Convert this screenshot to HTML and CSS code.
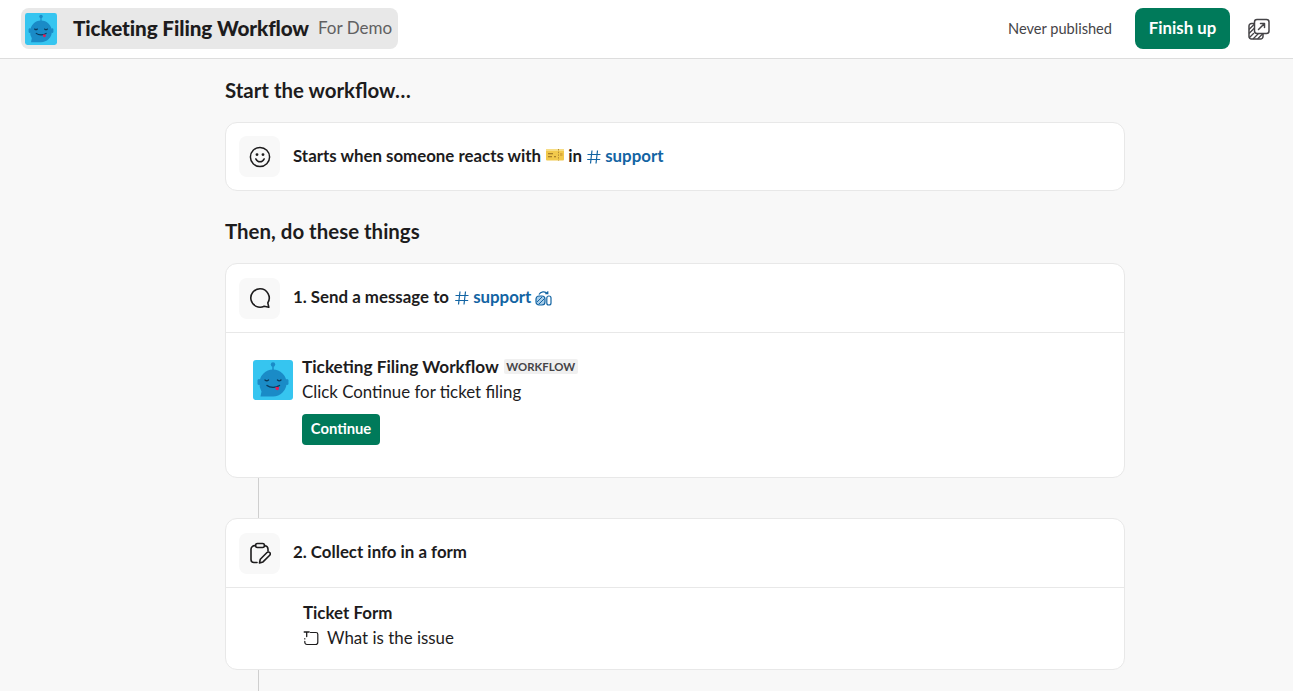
FILE: index.html
```html
<!DOCTYPE html>
<html lang="en">
<head>
<meta charset="utf-8">
<title>Ticketing Filing Workflow</title>
<link rel="stylesheet" href="styles.css">
</head>
<body>
<header class="topbar">
  <div class="title-chip">
    <svg class="logo logo-sm" viewBox="0 0 40 40"><use href="#bot"/></svg>
    <span class="title">Ticketing Filing Workflow</span>
    <span class="subtitle">For Demo</span>
  </div>
  <div class="top-actions">
    <span class="status">Never published</span>
    <button class="finish">Finish up</button>
    <svg class="share" viewBox="0 0 22 22" fill="none" stroke="#454447" stroke-width="1.500" stroke-linejoin="round" stroke-linecap="round">
      <rect x="6.500" y="1.500" width="14.500" height="14" rx="2.500"/>
      <path d="M10.500 11.500 16.500 5.500M12.500 5.500h4v4"/>
      <path d="M6 5.500H3.500a2.500 2.500 0 0 0-2.500 2.500v10.500A2.500 2.500 0 0 0 3.500 21h9a2.500 2.500 0 0 0 2.500-2.500V16"/>
      <path d="M1.500 11 6 6.500M1.500 15 6 10.500M1.500 19.500 5.500 15.500M5.500 20.500 10 16M10 20.500 14.500 16" stroke-width="1.300"/>
    </svg>
  </div>
</header>

<main class="content">
  <h2 class="section-title first">Start the workflow…</h2>
  <section class="card">
    <div class="card-head">
      <span class="icon-box">
        <svg viewBox="0 0 22 22" fill="none" stroke="#1d1c1d" stroke-width="1.500" stroke-linecap="round"><circle cx="11" cy="11" r="9.600"/><path d="M6.800 12.800c1 2 2.600 3 4.200 3s3.200-1 4.200-3"/><circle cx="8" cy="8.600" r=".7" fill="#1d1c1d"/><circle cx="14" cy="8.600" r=".7" fill="#1d1c1d"/></svg>
      </span>
      <span class="head-text">Starts when someone reacts with
        <svg class="ticket" viewBox="0 0 18 14"><rect y="1" width="18" height="11.500" rx="1" fill="#f2c94c"/><rect y="1" width="18" height="2" fill="#f7dd85"/><rect x="2" y="5" width="5" height="1.300" fill="#a9812a"/><rect x="2" y="8" width="4" height="1.300" fill="#a9812a"/><rect x="8" y="8" width="2" height="1.300" fill="#a9812a"/><path d="M12.500 1v11.500" stroke="#b58d35" stroke-dasharray="1.500 1.200"/><rect x="14" y="5" width="2.500" height="3" fill="#d9a93b"/></svg>
        in <a class="channel"><svg class="hash" viewBox="0 0 14 14" fill="none" stroke="#1264a3" stroke-width="1.200"><path d="M5 .5 3.500 13.500M10.500 .5 9 13.500M.5 4.500h13M.2 9.500h13"/></svg>support</a></span>
    </div>
  </section>

  <h2 class="section-title">Then, do these things</h2>
  <section class="card">
    <div class="card-head bordered">
      <span class="icon-box">
        <svg viewBox="0 0 22 22" fill="none" stroke="#1d1c1d" stroke-width="1.600" stroke-linejoin="round"><path d="M11 1.800a9.200 9.200 0 1 0 4.200 17.400l4.600 1.100-1-4.400A9.200 9.200 0 0 0 11 1.800Z"/></svg>
      </span>
      <span class="head-text">1. Send a message to <a class="channel"><svg class="hash" viewBox="0 0 14 14" fill="none" stroke="#1264a3" stroke-width="1.200"><path d="M5 .5 3.500 13.500M10.500 .5 9 13.500M.5 4.500h13M.2 9.500h13"/></svg>support</a>
        <svg class="shared" viewBox="0 0 17 16" fill="none" stroke="#1264a3" stroke-width="1.200"><rect x="1" y="6" width="9" height="9" rx="3" fill="#a9cde8"/><path d="M2 12 7 7M3.500 14.500 9.500 8.500" stroke-width="1"/><rect x="11.800" y="6" width="4.200" height="9" rx="2"/><path d="M4 4.500C5.500 1.500 10 .8 12.500 3.500M12.800 1.200v2.500h-2.500"/></svg>
      </span>
    </div>
    <div class="message">
      <svg class="logo logo-lg" viewBox="0 0 40 40"><use href="#bot"/></svg>
      <div class="message-body">
        <div class="sender"><strong>Ticketing Filing Workflow</strong><span class="tag">WORKFLOW</span></div>
        <p class="message-text">Click Continue for ticket filing</p>
        <button class="continue">Continue</button>
      </div>
    </div>
  </section>

  <div class="connector"></div>

  <section class="card">
    <div class="card-head bordered">
      <span class="icon-box">
        <svg viewBox="0 0 22 22" fill="none" stroke="#1d1c1d" stroke-width="1.600" stroke-linecap="round" stroke-linejoin="round"><path d="M6.500 3.800A3.500 3.500 0 0 0 2 7v10.500a3 3 0 0 0 3 3h3"/><path d="M15.500 3.800A3.500 3.500 0 0 1 19 7v2"/><rect x="6.500" y="1.500" width="9" height="4" rx="2"/><path d="M10.500 21l.8-3.800 6.700-6.700a1.900 1.900 0 0 1 2.700 2.700l-6.700 6.700Z"/></svg>
      </span>
      <span class="head-text">2. Collect info in a form</span>
    </div>
    <div class="form-body">
      <strong class="form-name">Ticket Form</strong>
      <div class="form-field">
        <svg viewBox="0 0 16 16" fill="none" stroke="#1d1c1d" stroke-width="1.200" stroke-linecap="round"><path d="M7.500 2.500h5.500a1.800 1.800 0 0 1 1.800 1.800v8a2.200 2.200 0 0 1-2.200 2.200H4a2.200 2.200 0 0 1-2.200-2.200v-1M1.800 9v-.5"/><path d="M1.200 2h5M3.700 2v4.500" stroke-width="1.300"/></svg>
        <span>What is the issue</span>
      </div>
    </div>
  </section>

  <div class="connector"></div>
</main>

<svg class="defs" aria-hidden="true">
  <symbol id="bot" viewBox="0 0 40 40">
    <rect width="40" height="40" rx="3" fill="#36c5f0"/>
    <path d="M20 4v7" stroke="#1a8bc7" stroke-width="1.500"/>
    <circle cx="20" cy="4.500" r="2.200" fill="#1a8bc7"/>
    <rect x="4.500" y="19" width="3" height="6" rx="1.500" fill="#1a8bc7"/>
    <rect x="32.500" y="19" width="3" height="6" rx="1.500" fill="#1a8bc7"/>
    <path d="M6.500 23a13.500 13.500 0 1 1 13.500 13.500H7.500l1-5A13.400 13.400 0 0 1 6.500 23Z" fill="#1a8bc7"/>
    <path d="M12 20c1 1 2.500 1 3.500 0M24.500 20c1 1 2.500 1 3.500 0M14 25.500c3 2.500 9 2.500 12.500 0" stroke="#0a3a5c" stroke-width="1.400" fill="none" stroke-linecap="round"/>
    <path d="M22.500 27h3.500v1.500a1.700 1.700 0 0 1-3.500 0Z" fill="#e01e5a"/>
  </symbol>
</svg>
</body>
</html>
```
FILE: styles.css
```css
* { box-sizing: border-box; }
html, body { margin: 0; height: 100%; }
body {
  background: #f8f8f8;
  color: #1d1c1d;
  font-family: Lato, "Liberation Sans", sans-serif;
  overflow: hidden;
}
.topbar {
  height: 59px;
  background: #fff;
  border-bottom: 1px solid #dddddd;
  display: flex;
  align-items: center;
  justify-content: space-between;
  padding: 0 23px 1px 21px;
}
.title-chip {
  display: flex;
  align-items: center;
  height: 41px;
  background: #e8e8e8;
  border-radius: 8px;
  padding: 0 6px 0 4px;
}
.logo { display: block; flex: none; }
.logo-sm { width: 32px; height: 32px; margin-right: 16px; }
.title { font-size: 20.700px; font-weight: 900; letter-spacing: -.1px; padding-bottom: 2px; }
.subtitle { font-size: 17px; color: #616061; margin-left: 9px; padding-bottom: 2px; }
.top-actions { display: flex; align-items: center; }
.status { font-size: 14.600px; color: #454447; padding-bottom: 1px; }
.finish {
  margin-left: 23px;
  width: 95px;
  height: 41px;
  background: #007a5a;
  color: #fff;
  border: 0;
  border-radius: 8px;
  font: 700 16.800px Lato, sans-serif;
  padding: 0 0 2px;
}
.share { width: 22px; height: 22px; margin-left: 18px; }
.content { width: 900px; margin-left: 225px; }
.section-title {
  margin: 0;
  height: 32px;
  font-size: 20.450px;
  line-height: 32px;
  font-weight: 700;
}
.first { margin-top: 15px; margin-bottom: 16px; }
.section-title:not(.first) { margin-top: 24px; margin-bottom: 16px; }
.card {
  background: #fff;
  border: 1px solid #e8e8e8;
  border-radius: 12px;
  overflow: hidden;
}
.card-head {
  display: flex;
  align-items: center;
  height: 67px;
  padding-left: 13px;
}
.card-head.bordered { height: 69px; border-bottom: 1px solid #e8e8e8; }
.icon-box {
  width: 41px;
  height: 41px;
  flex: none;
  background: #f8f8f8;
  border-radius: 8px;
  display: flex;
  align-items: center;
  justify-content: center;
  margin-right: 13px;
}
.icon-box svg { width: 22px; height: 22px; }
.head-text { font-size: 16.850px; font-weight: 700; white-space: nowrap; padding-bottom: 2px; }
.bordered .head-text { padding-bottom: 4px; }
.channel { color: #1264a3; }
.bordered .channel { margin-left: 1px; }
.hash { width: 14px; height: 14px; vertical-align: -2px; margin: 0 4px 0 1px; }
.ticket { width: 18px; height: 14px; vertical-align: 0; margin-left: 1px; }
.shared { width: 17px; height: 16px; vertical-align: -3px; }
.message { display: flex; padding: 23px 27px 0; height: 144px; }
.logo-lg { width: 40px; height: 40px; margin: 4px 9px 0 0; }
.message-body { min-width: 0; }
.sender { display: flex; align-items: center; height: 20px; }
.sender strong { font-size: 17.200px; }
.tag {
  margin-left: 5px;
  padding: 0 2.500px;
  height: 15px;
  line-height: 15px;
  background: #f0f0f0;
  border-radius: 2px;
  font-size: 11.350px;
  font-weight: 700;
  color: #454447;
}
.message-text { margin: 4px 0 0; font-size: 16.850px; line-height: 24px; }
.continue {
  display: block;
  margin-top: 10px;
  width: 78px;
  height: 31px;
  background: #007a5a;
  color: #fff;
  border: 0;
  border-radius: 4px;
  font: 700 14.800px Lato, sans-serif;
  padding: 0 0 3px;
}
.connector { width: 1px; height: 40px; background: #cfcfcf; margin-left: 33px; }
.form-body { padding: 15px 0 0 77px; height: 81px; }
.form-name { display: block; font-size: 16.900px; line-height: 20px; }
.form-field { display: flex; align-items: center; gap: 8px; margin-top: 5px; font-size: 16.900px; line-height: 20px; }
.form-field svg { width: 16px; height: 16px; flex: none; }
.defs { width: 0; height: 0; position: absolute; }
```
